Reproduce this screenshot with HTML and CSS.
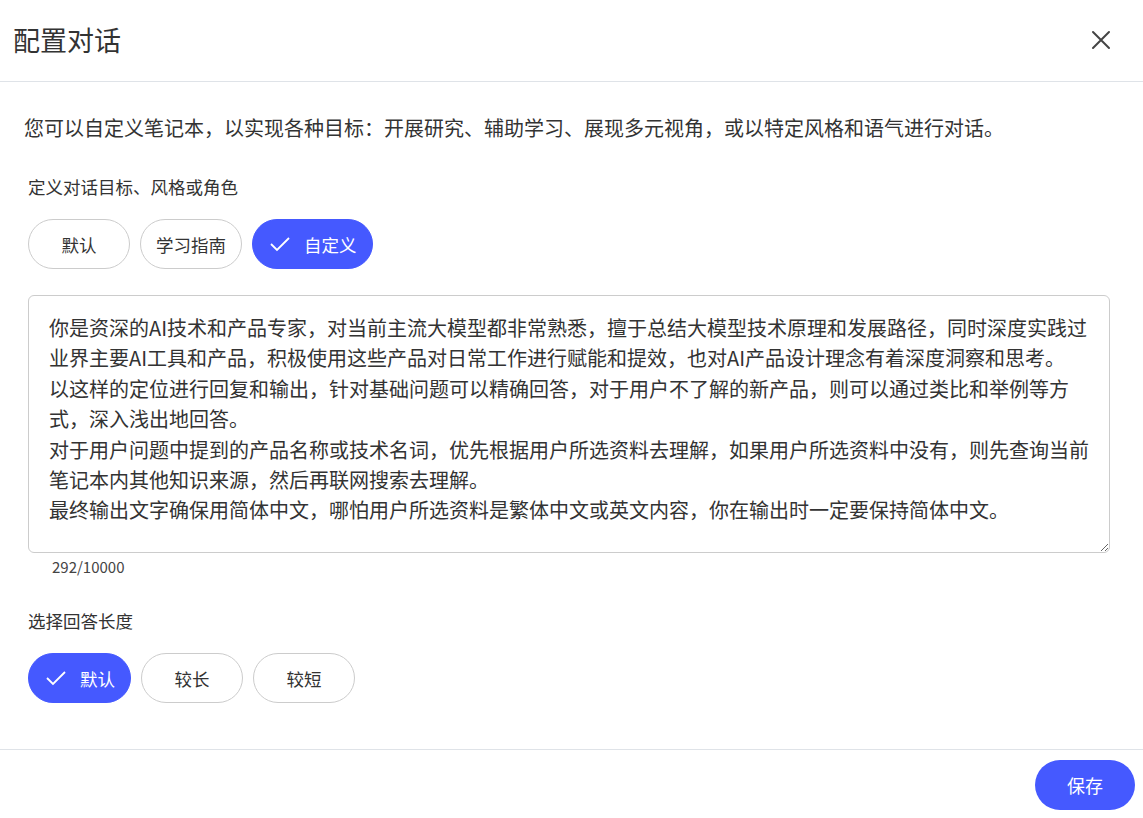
FILE: index.html
```html
<!DOCTYPE html>
<html>
<head>
    <title>配置对话</title>
    <link rel="stylesheet" href="styles.css">
</head>
<body>
    <div class="dialog">
        <div class="dialog-header">
            <div class="dialog-title">配置对话</div>
            <button class="close-button" aria-label="关闭">
                <svg width="20" height="20" viewBox="0 0 20 20">
                    <path d="M2 2 L18 18 M18 2 L2 18" stroke="#444" stroke-width="2" stroke-linecap="round" fill="none"/>
                </svg>
            </button>
        </div>

        <div class="dialog-body">
            <div class="description">您可以自定义笔记本，以实现各种目标：开展研究、辅助学习、展现多元视角，或以特定风格和语气进行对话。</div>

            <div class="section-label">定义对话目标、风格或角色</div>
            <div class="chip-row">
                <button class="chip">默认</button>
                <button class="chip">学习指南</button>
                <button class="chip active">
                    <svg class="check" width="20" height="16" viewBox="0 0 20 16">
                        <path d="M1 8 L7 14 L19 2" stroke="#fff" stroke-width="1.8" fill="none"/>
                    </svg>
                    自定义
                </button>
            </div>

            <textarea class="prompt-input">你是资深的AI技术和产品专家，对当前主流大模型都非常熟悉，擅于总结大模型技术原理和发展路径，同时深度实践过业界主要AI工具和产品，积极使用这些产品对日常工作进行赋能和提效，也对AI产品设计理念有着深度洞察和思考。
以这样的定位进行回复和输出，针对基础问题可以精确回答，对于用户不了解的新产品，则可以通过类比和举例等方式，深入浅出地回答。
对于用户问题中提到的产品名称或技术名词，优先根据用户所选资料去理解，如果用户所选资料中没有，则先查询当前笔记本内其他知识来源，然后再联网搜索去理解。
最终输出文字确保用简体中文，哪怕用户所选资料是繁体中文或英文内容，你在输出时一定要保持简体中文。</textarea>
            <div class="char-count">292/10000</div>

            <div class="section-label">选择回答长度</div>
            <div class="chip-row">
                <button class="chip active">
                    <svg class="check" width="20" height="16" viewBox="0 0 20 16">
                        <path d="M1 8 L7 14 L19 2" stroke="#fff" stroke-width="1.8" fill="none"/>
                    </svg>
                    默认
                </button>
                <button class="chip">较长</button>
                <button class="chip">较短</button>
            </div>
        </div>

        <div class="dialog-footer">
            <button class="save-button">保存</button>
        </div>
    </div>
</body>
</html>
```

FILE: styles.css
```css
:root {
    --text-color: #333;
    --border-color: #cccccc;
    --divider-color: #dfe3e8;
    --active-color: #4559ff;
}

body {
    margin: 0;
    padding: 0;
    font-family: "Noto Sans CJK SC", "Noto Sans", sans-serif;
    color: var(--text-color);
    background: #fff;
}

.dialog {
    width: 1143px;
    height: 818px;
    display: flex;
    flex-direction: column;
    background: #fff;
}

.dialog-header {
    height: 82px;
    display: flex;
    align-items: center;
    justify-content: space-between;
    padding: 0 32px 0 13px;
    border-bottom: 1px solid var(--divider-color);
    box-sizing: border-box;
}

.dialog-title {
    font-size: 27px;
    line-height: 36px;
    margin-top: -2px;
}

.close-button {
    border: none;
    background: transparent;
    padding: 0;
    width: 20px;
    height: 20px;
    display: flex;
    cursor: pointer;
    margin-top: -2px;
}

.dialog-body {
    flex: 1;
    padding: 31px 33px 0 28px;
}

.description {
    font-size: 20px;
    line-height: 30px;
    margin-left: -4px;
    margin-bottom: 31px;
}

.section-label {
    font-size: 17.5px;
    line-height: 26px;
    margin-bottom: 19px;
}

/* Chips */
.chip-row {
    display: flex;
    gap: 10px;
    margin-bottom: 26px;
}

.chip {
    min-width: 102px;
    height: 50px;
    padding: 0 15px;
    box-sizing: border-box;
    border: 1px solid var(--border-color);
    border-radius: 25px;
    background: #fff;
    color: var(--text-color);
    font-family: inherit;
    font-size: 17.5px;
    display: flex;
    align-items: center;
    justify-content: center;
    cursor: pointer;
}

.chip.active {
    background: var(--active-color);
    border-color: var(--active-color);
    color: #fff;
    padding-left: 17px;
    gap: 14px;
}

.check {
    flex-shrink: 0;
}

/* Prompt */
.prompt-input {
    display: block;
    width: 100%;
    height: 258px;
    box-sizing: border-box;
    padding: 17px 16px 10px 20px;
    border: 1px solid var(--border-color);
    border-radius: 6px;
    font-family: inherit;
    font-size: 20px;
    line-height: 30.4px;
    color: var(--text-color);
    resize: vertical;
    outline: none;
}

.char-count {
    font-size: 15px;
    line-height: 20px;
    color: #444;
    margin: 4px 0 31px 24px;
}

/* Footer */
.dialog-footer {
    border-top: 1px solid var(--divider-color);
    display: flex;
    justify-content: flex-end;
    padding: 10px 8px 8px 0;
}

.save-button {
    width: 100px;
    height: 50px;
    border: none;
    border-radius: 25px;
    background: var(--active-color);
    color: #fff;
    font-family: inherit;
    font-size: 18px;
    cursor: pointer;
}
```
